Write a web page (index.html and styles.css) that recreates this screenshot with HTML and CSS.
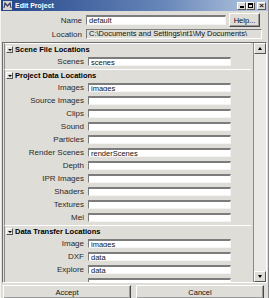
FILE: index.html
```html
<!DOCTYPE html>
<html lang="en">
<head>
    <meta charset="UTF-8">
    <title>Edit Project</title>
    <link rel="stylesheet" href="styles.css">
</head>
<body>
    <div class="window">
        <div class="titlebar">
            <svg class="app-icon" width="9" height="9" viewBox="0 0 9 9">
                <rect x="0" y="0" width="9" height="9" fill="#d8d4cc"/>
                <path d="M1 7 L2 2 L4.5 5 L7 2 L8 7" stroke="#3a3a5a" stroke-width="1.2" fill="none"/>
            </svg>
            <span class="title">Edit Project</span>
            <div class="caption-buttons">
                <span class="cap-btn"><span class="glyph-min"></span></span>
                <span class="cap-btn"><span class="glyph-max"></span></span>
                <span class="cap-btn close">&#215;</span>
            </div>
        </div>

        <div class="top">
            <div class="top-row">
                <label class="label top-label">Name</label>
                <input class="field name-field" type="text" value="default">
                <button class="btn help-btn">Help...</button>
            </div>
            <div class="top-row">
                <label class="label top-label">Location</label>
                <div class="location">C:\Documents and Settings\nt1\My Documents\</div>
            </div>
        </div>

        <div class="panel">
            <div class="sections">
                <div class="section">
                    <div class="section-head"><span class="toggle"></span>Scene File Locations</div>
                    <div class="row"><label class="label">Scenes</label><input class="field" type="text" value="scenes"></div>
                </div>

                <div class="section">
                    <div class="section-head"><span class="toggle"></span>Project Data Locations</div>
                    <div class="row"><label class="label">Images</label><input class="field" type="text" value="images"></div>
                    <div class="row"><label class="label">Source Images</label><input class="field" type="text" value=""></div>
                    <div class="row"><label class="label">Clips</label><input class="field" type="text" value=""></div>
                    <div class="row"><label class="label">Sound</label><input class="field" type="text" value=""></div>
                    <div class="row"><label class="label">Particles</label><input class="field" type="text" value=""></div>
                    <div class="row"><label class="label">Render Scenes</label><input class="field" type="text" value="renderScenes"></div>
                    <div class="row"><label class="label">Depth</label><input class="field" type="text" value=""></div>
                    <div class="row"><label class="label">IPR Images</label><input class="field" type="text" value=""></div>
                    <div class="row"><label class="label">Shaders</label><input class="field" type="text" value=""></div>
                    <div class="row"><label class="label">Textures</label><input class="field" type="text" value=""></div>
                    <div class="row"><label class="label">Mel</label><input class="field" type="text" value=""></div>
                </div>

                <div class="section">
                    <div class="section-head"><span class="toggle"></span>Data Transfer Locations</div>
                    <div class="row"><label class="label">Image</label><input class="field" type="text" value="images"></div>
                    <div class="row"><label class="label">DXF</label><input class="field" type="text" value="data"></div>
                    <div class="row"><label class="label">Explore</label><input class="field" type="text" value="data"></div>
                    <div class="row"><label class="label"></label><input class="field" type="text" value=""></div>
                </div>
            </div>
            <div class="scrollbar">
                <span class="scroll-btn"><span class="arrow-up"></span></span>
                <span class="scroll-track"></span>
                <span class="scroll-btn"><span class="arrow-down"></span></span>
            </div>
        </div>

        <div class="bottom">
            <button class="btn">Accept</button>
            <button class="btn">Cancel</button>
        </div>
    </div>
</body>
</html>
```

FILE: styles.css
```css
* {
    box-sizing: border-box;
}
body {
    margin: 0;
    background-color: #dfddd8;
    font-family: 'Liberation Sans', Arial, sans-serif;
    font-size: 8px;
    color: #111;
}
.window {
    width: 269px;
    height: 298px;
    display: flex;
    flex-direction: column;
    border-left: 1px solid #f4f3f0;
    border-right: 1px solid #8a8a8a;
    overflow: hidden;
}
.titlebar {
    height: 11px;
    flex-shrink: 0;
    display: flex;
    align-items: center;
    padding: 0 2px 0 2px;
    background: linear-gradient(to right, #24468a, #6685b8 60%, #b8cae2);
}
.app-icon {
    margin-right: 3px;
}
.title {
    color: #ffffff;
    font-weight: bold;
    font-size: 7px;
    flex-grow: 1;
}
.caption-buttons {
    display: flex;
    gap: 0;
}
.cap-btn {
    width: 9px;
    height: 8px;
    background-color: #dcdad4;
    border: 1px solid;
    border-color: #fff #555 #555 #fff;
    display: flex;
    align-items: center;
    justify-content: center;
    font-size: 8px;
    line-height: 6px;
    font-weight: bold;
}
.cap-btn.close {
    margin-left: 2px;
}
.glyph-min {
    width: 4px;
    height: 2px;
    background: #000;
    margin-top: 3px;
}
.glyph-max {
    width: 5px;
    height: 5px;
    border: 1px solid #000;
    border-top-width: 2px;
}
.top {
    display: flex;
    flex-direction: column;
    gap: 2px;
    padding: 2px 6px 0 0;
}
.top-row {
    display: flex;
    align-items: center;
}
.label {
    text-align: right;
    color: #2a2a2a;
    white-space: nowrap;
}
.top-label {
    width: 85px;
    padding-right: 4px;
    flex-shrink: 0;
}
.field {
    height: 9px;
    padding: 0 2px;
    margin: 0;
    font-family: inherit;
    font-size: 7.5px;
    color: #111;
    background-color: #ffffff;
    border: 1px solid;
    border-color: #7c7c7c #f4f4f4 #f4f4f4 #7c7c7c;
    border-top-width: 2px;
    outline: none;
}
.name-field {
    width: 140px;
    height: 10px;
}
.help-btn {
    width: 31px;
    height: 14px;
    margin-left: 3px;
}
.location {
    width: 176px;
    height: 10px;
    font-size: 7.5px;
    line-height: 8px;
    padding-left: 2px;
    border: 1px solid;
    border-color: #7c7c7c #fff #fff #7c7c7c;
    white-space: nowrap;
    overflow: hidden;
}
.panel {
    margin: 3px 1px 0 1px;
    height: 241px;
    display: flex;
    border: 1px solid;
    border-color: #6e6e6e #ffffff #ffffff #6e6e6e;
    flex-shrink: 0;
}
.sections {
    flex-grow: 1;
    overflow: hidden;
    padding: 0 2px 0 1px;
    border-right: 1px solid #8a8a8a;
}
.section {
    border-top: 1px solid #ffffff;
    border-left: 1px solid #8a8a8a;
    padding-bottom: 1px;
}
.section-head {
    height: 11px;
    display: flex;
    align-items: center;
    font-weight: bold;
    font-size: 7.5px;
    color: #000;
    padding-left: 1px;
}
.toggle {
    width: 7px;
    height: 7px;
    margin-right: 2px;
    border: 1px solid;
    border-color: #fff #555 #555 #fff;
    background-color: #e4e2dd;
    position: relative;
}
.toggle::after {
    content: '';
    position: absolute;
    left: 1px;
    top: 1.5px;
    border-left: 2px solid transparent;
    border-right: 2px solid transparent;
    border-top: 2.5px solid #000;
}
.row {
    height: 13px;
    display: flex;
    align-items: center;
}
.row .label {
    width: 83px;
    padding-right: 4px;
    flex-shrink: 0;
}
.row .field {
    width: 143px;
}
.scrollbar {
    width: 12px;
    display: flex;
    flex-direction: column;
    background-color: #ebe9e5;
}
.scroll-btn {
    height: 11px;
    background-color: #dedcd7;
    border: 1px solid;
    border-color: #fff #555 #555 #fff;
    display: flex;
    align-items: center;
    justify-content: center;
}
.scroll-track {
    flex-grow: 1;
}
.arrow-up {
    border-left: 2.5px solid transparent;
    border-right: 2.5px solid transparent;
    border-bottom: 3px solid #000;
}
.arrow-down {
    border-left: 2.5px solid transparent;
    border-right: 2.5px solid transparent;
    border-top: 3px solid #000;
}
.btn {
    font-family: inherit;
    font-size: 7.5px;
    color: #111;
    background-color: #dfddd8;
    border: 1px solid;
    border-color: #fff #4a4a4a #4a4a4a #fff;
    box-shadow: inset -1px -1px 0 #9a9a9a;
    padding: 0;
}
.bottom {
    display: grid;
    grid-template-columns: 1fr 1fr;
    gap: 5px;
    padding: 2px 4px 0 2px;
}
.bottom .btn {
    height: 14px;
}
```
